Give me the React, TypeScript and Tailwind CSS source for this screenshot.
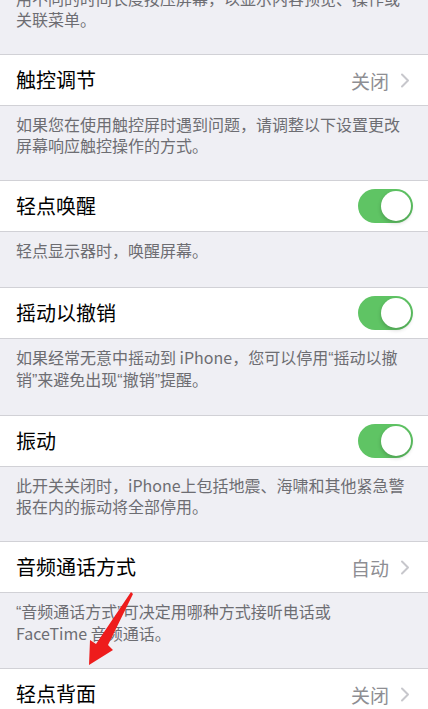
const font = { fontFamily: '"Noto Sans CJK SC", "Noto Sans", sans-serif' };

function Chevron() {
  return (
    <svg width="10" height="15" viewBox="0 0 10 15" className="ml-[11px]">
      <path d="M2 1.5 L8 7.5 L2 13.5" fill="none" stroke="#c7c7cc" strokeWidth="2" strokeLinecap="round" strokeLinejoin="round" />
    </svg>
  );
}

function Toggle() {
  return (
    <div className="w-[55px] h-[34px] rounded-full bg-[#5fc464] flex items-center justify-end p-[2px]">
      <div className="w-[30px] h-[30px] rounded-full bg-white shadow-[0_2px_4px_rgba(0,0,0,0.2)]" />
    </div>
  );
}

function Row({ title, value, toggle }: { title: string; value?: string; toggle?: boolean }) {
  return (
    <div className="h-[52px] bg-white border-y border-[#d1d1d6] flex items-center pl-4 pr-[15px]">
      <span className="text-[20px] text-black flex-1 leading-none">{title}</span>
      {toggle ? (
        <Toggle />
      ) : (
        <div className="flex items-center pr-[3px]">
          <span className="text-[19px] text-[#8e8e93] leading-none">{value}</span>
          <Chevron />
        </div>
      )}
    </div>
  );
}

function Footer({ children, first, single }: { children: React.ReactNode; first?: boolean; single?: boolean }) {
  return (
    <div
      className={`px-4 pt-[8px] text-[16px] leading-[21px] text-[#6d6d72] ${single ? "pb-[26px]" : "pb-[24px]"} ${first ? "-mt-[20px]" : ""}`}
    >
      {children}
    </div>
  );
}

// narrow curly quotes like the iOS system font
function Q({ c }: { c: string }) {
  return <span style={{ fontFamily: '"Liberation Sans", sans-serif' }}>{c}</span>;
}

export default function App() {
  return (
    <div className="relative w-[428px] h-[709px] overflow-hidden bg-[#efeff4]" style={font}>
      <Footer first>
        用不同的时间长度按压屏幕，以显示内容预览、操作或
        <br />
        关联菜单。
      </Footer>
      <Row title="触控调节" value="关闭" />
      <Footer>
        如果您在使用触控屏时遇到问题，请调整以下设置更改
        <br />
        屏幕响应触控操作的方式。
      </Footer>
      <Row title="轻点唤醒" toggle />
      <Footer single>轻点显示器时，唤醒屏幕。</Footer>
      <Row title="摇动以撤销" toggle />
      <Footer>
        如果经常无意中摇动到 iPhone，您可以停用<Q c="“" />摇动以撤
        <br />
        销<Q c="”" />来避免出现<Q c="“" />撤销<Q c="”" />提醒。
      </Footer>
      <Row title="振动" toggle />
      <Footer>
        此开关关闭时，iPhone上包括地震、海啸和其他紧急警
        <br />
        报在内的振动将全部停用。
      </Footer>
      <Row title="音频通话方式" value="自动" />
      <Footer>
        <Q c="“" />音频通话方式<Q c="”" />可决定用哪种方式接听电话或
        <br />
        FaceTime 音频通话。
      </Footer>
      <Row title="轻点背面" value="关闭" />

      <svg className="absolute left-0 top-0 pointer-events-none" width="428" height="709" viewBox="0 0 428 709">
        <path d="M131 592 L133 594 L108 645 L113 650 L89 665 L90 640 L96 644 Z" fill="#ee1c1c" />
      </svg>
    </div>
  );
}
